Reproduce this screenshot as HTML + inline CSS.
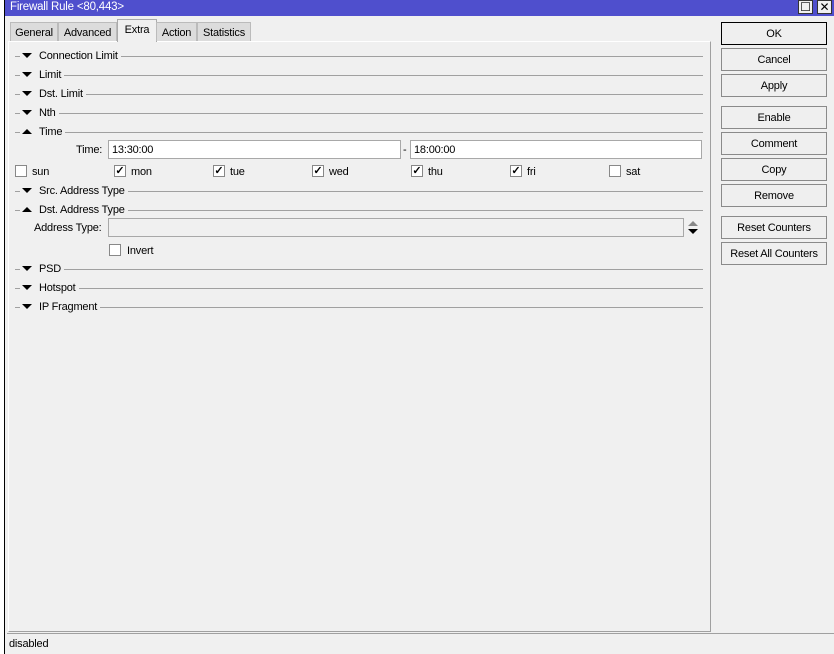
<!DOCTYPE html>
<html><head><style>
*{margin:0;padding:0;box-sizing:border-box}
body{width:834px;height:654px;background:#f0f0f0;font-family:"Liberation Sans",sans-serif;font-size:11px;color:#000;position:relative;overflow:hidden}
.a{position:absolute}
.lstrip{left:0;top:0;width:4px;height:654px;background:#fff}
.lline{left:4px;top:0;width:1px;height:654px;background:#000}
.title{left:5px;top:0;width:829px;height:16px;background:#4f4fcd;color:#fff;font-size:11.5px;padding:1px 0 0 5px;letter-spacing:-0.2px}
.tb{top:0;width:15px;height:14px;background:#f0f0f0;border:1px solid #333;font-size:12px;line-height:12px;text-align:center;color:#000}
.tab{top:22px;height:19px;border:1px solid #bbb;border-bottom:none;background:#dcdcdc;padding-top:4px;font-size:11px;text-align:center;letter-spacing:-0.2px}
.tab.sel{top:19px;height:23px;background:#f0f0f0;border-color:#aaa;padding-top:4px}
.panel{left:8px;top:41px;width:703px;height:591px;border:1px solid #a0a0a0;border-top:1px solid #fff;border-left:1px solid #fff}
.sec{left:15px;width:688px;height:14px}
.sec .ln{position:absolute;left:0;right:0;top:7px;height:1px;background:#a0a0a0}
.sec .lab{position:absolute;left:5px;top:1px;background:#f0f0f0;padding:0 3px 0 2px;font-size:11px;white-space:nowrap;letter-spacing:-0.2px}
.tri{display:inline-block;width:0;height:0;border-left:5px solid transparent;border-right:5px solid transparent;margin:0 7px 0 0;vertical-align:1px}
.dn{border-top:5px solid #000}
.up{border-bottom:5px solid #000}
.inp{height:19px;background:#fff;border:1px solid #a8a8a8;padding:3px 3px;font-size:11px;letter-spacing:-0.2px}
.cb{width:12px;height:12px;background:#fff;border:1px solid #888;font-size:11px;line-height:10px;text-align:center;font-weight:bold}
.dl{font-size:11px;letter-spacing:-0.2px}
.btn{left:721px;width:106px;height:23px;border:1px solid #8a8a8a;background:#efefef;text-align:center;line-height:23px;font-size:11px;letter-spacing:-0.2px}
.status{left:7px;top:633px;width:827px;height:20px;border-top:1px solid #a0a0a0;padding:4px 2px;font-size:11px;letter-spacing:-0.2px}
</style></head><body>
<div class="a lstrip"></div><div class="a lline"></div>
<div class="a title">Firewall Rule &lt;80,443&gt;</div>
<div class="a tb" style="left:798px">☐</div>
<div class="a tb" style="left:817px">✕</div>
<div class="a panel"></div>
<div class="a tab" style="left:10px;width:48px">General</div>
<div class="a tab" style="left:58px;width:59px">Advanced</div>
<div class="a tab sel" style="left:117px;width:40px">Extra</div>
<div class="a tab" style="left:156px;width:41px">Action</div>
<div class="a tab" style="left:197px;width:54px">Statistics</div>

<div class="a sec" style="top:49px"><div class="ln"></div><div class="lab"><span class="tri dn"></span>Connection Limit</div></div>
<div class="a sec" style="top:68px"><div class="ln"></div><div class="lab"><span class="tri dn"></span>Limit</div></div>
<div class="a sec" style="top:87px"><div class="ln"></div><div class="lab"><span class="tri dn"></span>Dst. Limit</div></div>
<div class="a sec" style="top:106px"><div class="ln"></div><div class="lab"><span class="tri dn"></span>Nth</div></div>
<div class="a sec" style="top:125px"><div class="ln"></div><div class="lab"><span class="tri up"></span>Time</div></div>

<div class="a dl" style="left:76px;top:144px">Time:</div>
<div class="a inp" style="left:108px;top:140px;width:293px">13:30:00</div>
<div class="a dl" style="left:403px;top:144px">-</div>
<div class="a inp" style="left:410px;top:140px;width:292px">18:00:00</div>

<div class="a cb" style="left:15px;top:165px"></div><div class="a dl" style="left:32px;top:166px">sun</div>
<div class="a cb" style="left:114px;top:165px">✓</div><div class="a dl" style="left:131px;top:166px">mon</div>
<div class="a cb" style="left:213px;top:165px">✓</div><div class="a dl" style="left:230px;top:166px">tue</div>
<div class="a cb" style="left:312px;top:165px">✓</div><div class="a dl" style="left:329px;top:166px">wed</div>
<div class="a cb" style="left:411px;top:165px">✓</div><div class="a dl" style="left:428px;top:166px">thu</div>
<div class="a cb" style="left:510px;top:165px">✓</div><div class="a dl" style="left:527px;top:166px">fri</div>
<div class="a cb" style="left:609px;top:165px"></div><div class="a dl" style="left:626px;top:166px">sat</div>

<div class="a sec" style="top:184px"><div class="ln"></div><div class="lab"><span class="tri dn"></span>Src. Address Type</div></div>
<div class="a sec" style="top:203px"><div class="ln"></div><div class="lab"><span class="tri up"></span>Dst. Address Type</div></div>
<div class="a dl" style="left:34px;top:222px">Address Type:</div>
<div class="a inp" style="left:108px;top:218px;width:576px;background:#f0f0f0"></div>
<svg class="a" style="left:687px;top:221px" width="12" height="14"><path d="M1 5 L6 0 L11 5Z" fill="#888"/><path d="M1 8 L11 8 L6 13Z" fill="#000"/></svg>
<div class="a cb" style="left:109px;top:244px"></div><div class="a dl" style="left:127px;top:245px">Invert</div>

<div class="a sec" style="top:262px"><div class="ln"></div><div class="lab"><span class="tri dn"></span>PSD</div></div>
<div class="a sec" style="top:281px"><div class="ln"></div><div class="lab"><span class="tri dn"></span>Hotspot</div></div>
<div class="a sec" style="top:300px"><div class="ln"></div><div class="lab"><span class="tri dn"></span>IP Fragment</div></div>

<div class="a btn" style="top:22px;border:1px solid #000">OK</div>
<div class="a btn" style="top:48px">Cancel</div>
<div class="a btn" style="top:74px">Apply</div>
<div class="a btn" style="top:106px">Enable</div>
<div class="a btn" style="top:132px">Comment</div>
<div class="a btn" style="top:158px">Copy</div>
<div class="a btn" style="top:184px">Remove</div>
<div class="a btn" style="top:216px">Reset Counters</div>
<div class="a btn" style="top:242px">Reset All Counters</div>

<div class="a status">disabled</div>
</body></html>
